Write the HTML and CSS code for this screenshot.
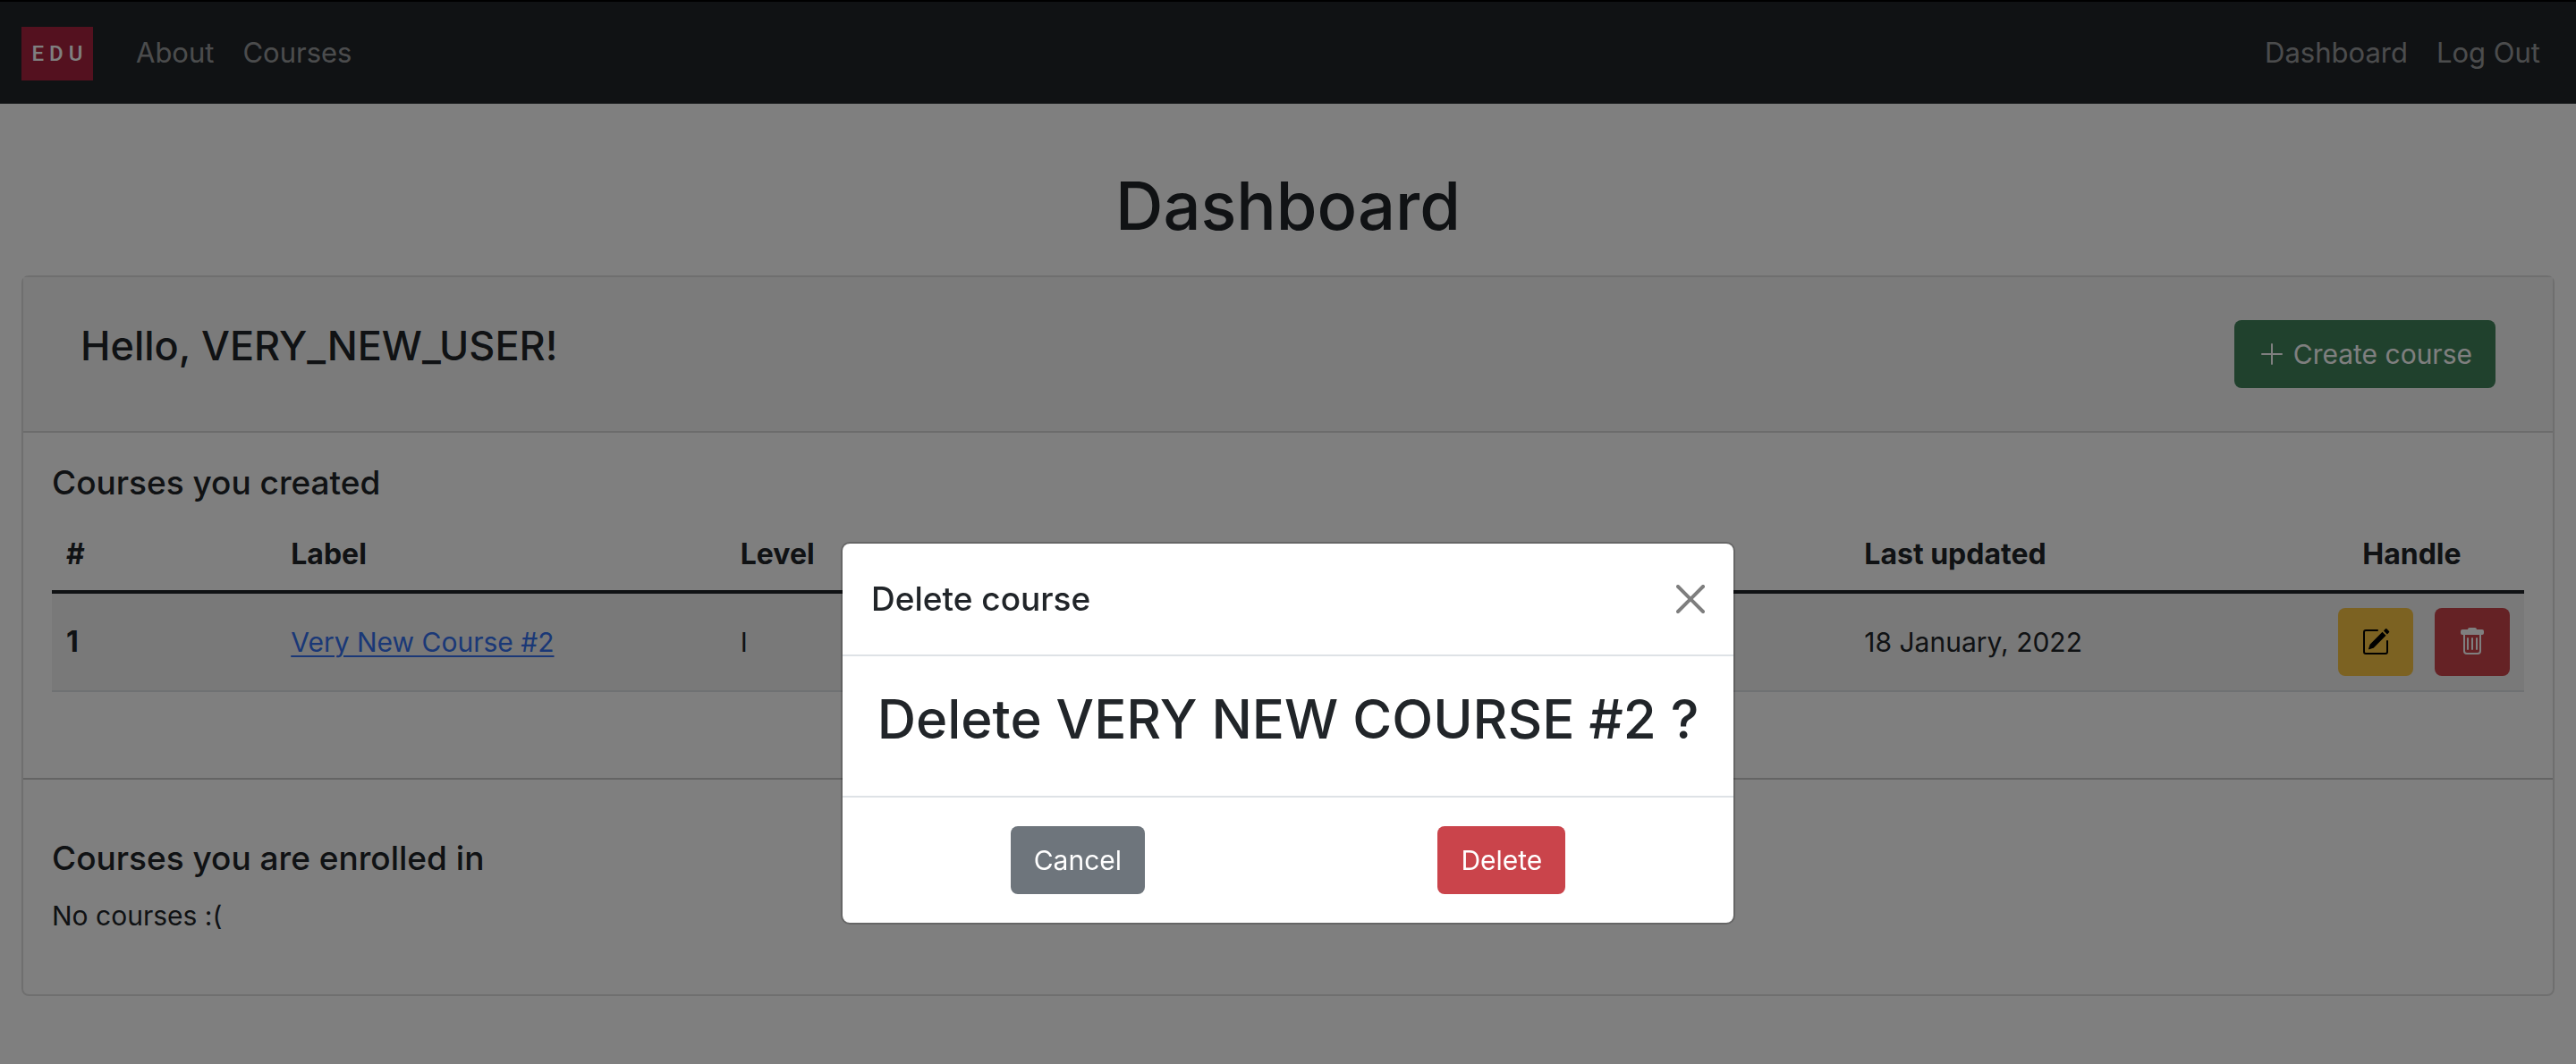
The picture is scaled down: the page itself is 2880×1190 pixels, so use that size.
FILE: index.html
```html
<!DOCTYPE html>
<html lang="en">
<head>
<meta charset="utf-8">
<meta name="viewport" content="width=device-width, initial-scale=1">
<title>Dashboard</title>
<link rel="stylesheet" href="styles.css">
</head>
<body>
<header class="navbar">
  <a class="brand" href="#">E D U</a>
  <nav class="nav-links">
    <a class="nav-link" href="#">About</a>
    <a class="nav-link" href="#">Courses</a>
  </nav>
  <nav class="nav-links nav-end">
    <a class="nav-link" href="#">Dashboard</a>
    <a class="nav-link" href="#">Log Out</a>
  </nav>
</header>

<main class="page">
  <h1 class="page-title">Dashboard</h1>
  <div class="card">
    <div class="card-header">
      <h2 class="greeting">Hello, VERY_NEW_USER!</h2>
      <button class="btn btn-success" type="button">
        <svg class="icon" viewBox="0 0 16 16" fill="currentColor" aria-hidden="true"><path d="M8 2a.5.5 0 0 1 .5.5v5h5a.5.5 0 0 1 0 1h-5v5a.5.5 0 0 1-1 0v-5h-5a.5.5 0 0 1 0-1h5v-5A.5.5 0 0 1 8 2Z"/></svg>
        Create course
      </button>
    </div>
    <section class="card-section created">
      <h3 class="section-title">Courses you created</h3>
      <table class="courses">
        <colgroup>
          <col class="col-number">
          <col class="col-label">
          <col class="col-level">
          <col class="col-updated">
          <col class="col-handle">
        </colgroup>
        <thead>
          <tr>
            <th scope="col">#</th>
            <th scope="col">Label</th>
            <th scope="col">Level</th>
            <th scope="col">Last updated</th>
            <th scope="col" class="handle-head">Handle</th>
          </tr>
        </thead>
        <tbody>
          <tr>
            <th scope="row">1</th>
            <td><a class="course-link" href="#">Very New Course #2</a></td>
            <td>I</td>
            <td>18 January, 2022</td>
            <td>
              <div class="row-actions">
                <button class="btn btn-warning" type="button" aria-label="Edit course">
                  <svg class="icon" viewBox="0 0 16 16" fill="currentColor" aria-hidden="true"><path d="M15.502 1.94a.5.5 0 0 1 0 .706L14.459 3.69l-2-2L13.502.646a.5.5 0 0 1 .707 0l1.293 1.293zm-1.75 2.456-2-2L4.939 9.21a.5.5 0 0 0-.121.196l-.805 2.414a.25.25 0 0 0 .316.316l2.414-.805a.5.5 0 0 0 .196-.12l6.813-6.814z"/><path d="M1 13.5A1.5 1.5 0 0 0 2.5 15h11a1.5 1.5 0 0 0 1.500-1.500v-6a.5.5 0 0 0-1 0v6a.5.5 0 0 1-.5.5h-11a.5.5 0 0 1-.5-.5v-11a.5.5 0 0 1 .5-.5H9a.5.5 0 0 0 0-1H2.500A1.500 1.500 0 0 0 1 2.500v11z"/></svg>
                </button>
                <button class="btn btn-danger" type="button" aria-label="Delete course">
                  <svg class="icon" viewBox="0 0 16 16" fill="currentColor" aria-hidden="true"><path d="M6.500 0a1 1 0 0 0-1 1H2.500a1 1 0 0 0-1 1v1a1 1 0 0 0 1 1H3v9a2 2 0 0 0 2 2h6a2 2 0 0 0 2-2V4h.5a1 1 0 0 0 1-1V2a1 1 0 0 0-1-1h-3a1 1 0 0 0-1-1h-3ZM4 4h8v9a1 1 0 0 1-1 1H5a1 1 0 0 1-1-1V4Zm1.500 1.500a.5.5 0 0 0-.5.5v6a.5.5 0 0 0 1 0V6a.5.5 0 0 0-.5-.5Zm2.500 0a.5.5 0 0 0-.5.5v6a.5.5 0 0 0 1 0V6a.5.5 0 0 0-.5-.5Zm2.500 0a.5.5 0 0 0-.5.5v6a.5.5 0 0 0 1 0V6a.5.5 0 0 0-.5-.5Z" fill-rule="evenodd"/></svg>
                </button>
              </div>
            </td>
          </tr>
        </tbody>
      </table>
    </section>
    <section class="card-section enrolled">
      <h3 class="section-title">Courses you are enrolled in</h3>
      <p class="empty-note">No courses :(</p>
    </section>
  </div>
</main>

<div class="backdrop">
  <div class="modal" role="dialog" aria-modal="true" aria-labelledby="modal-title">
    <div class="modal-header">
      <h2 class="modal-title" id="modal-title">Delete course</h2>
      <button class="btn-close" type="button" aria-label="Close">
        <svg class="icon-close" viewBox="0 0 16 16" fill="currentColor" aria-hidden="true"><path d="M.293.293a1 1 0 0 1 1.414 0L8 6.586 14.293.293a1 1 0 1 1 1.414 1.414L9.414 8l6.293 6.293a1 1 0 0 1-1.414 1.414L8 9.414l-6.293 6.293a1 1 0 0 1-1.414-1.414L6.586 8 .293 1.707a1 1 0 0 1 0-1.414z"/></svg>
      </button>
    </div>
    <div class="modal-body">
      <p class="question">Delete VERY NEW COURSE #2 ?</p>
    </div>
    <div class="modal-footer">
      <button class="btn btn-secondary" type="button">Cancel</button>
      <button class="btn btn-danger" type="button">Delete</button>
    </div>
  </div>
</div>
</body>
</html>
```
FILE: styles.css
```css
* {
  box-sizing: border-box;
}

body {
  margin: 0;
  background: #fff;
  color: #212529;
  font-family: Inter, "Liberation Sans", sans-serif;
  font-size: 30px;
  line-height: 48px;
}

h1, h2, h3, p {
  margin: 0;
  font-weight: 500;
}

/* Top bar */
.navbar {
  display: flex;
  align-items: center;
  padding: 28px 24px 26px;
  border-top: 2px solid #000;
  background: #212529;
}

.brand {
  display: flex;
  align-items: center;
  justify-content: center;
  width: 80px;
  height: 60px;
  margin-right: 32px;
  background: #a8223e;
  color: #fff;
  font-family: Roboto, "Liberation Sans", sans-serif;
  font-size: 24px;
  font-weight: 500;
  text-decoration: none;
  white-space: nowrap;
}

.nav-links {
  display: flex;
  padding-bottom: 2px;
  font-size: 31px;
}

.nav-end {
  margin-left: auto;
}

.nav-link {
  padding: 0 16px;
  color: rgba(255, 255, 255, 0.55);
  text-decoration: none;
}

/* Page */
.page {
  padding: 66px 24px;
}

.page-title {
  margin-bottom: 30px;
  font-size: 74px;
  line-height: 96px;
  text-align: center;
}

.card {
  border: 2px solid #dfdfdf;
  border-radius: 8px;
}

.card-header {
  display: flex;
  align-items: flex-start;
  justify-content: space-between;
  padding: 48px 64px;
  border-bottom: 2px solid #d8d8d8;
  background: #f7f7f7;
}

.greeting {
  font-size: 45px;
  line-height: 58px;
}

.card-section {
  padding: 32px;
}

.created {
  padding-bottom: 96px;
  border-bottom: 2px solid #c8c8c8;
}

.enrolled {
  padding: 64px 32px;
}

.section-title {
  margin-bottom: 16px;
  font-size: 37px;
  line-height: 48px;
}

.empty-note {
  font-weight: 400;
}

/* Courses table */
.courses {
  width: 100%;
  table-layout: fixed;
  border-spacing: 0;
}

.col-number, .col-handle {
  width: 9.09%;
}

.col-label, .col-updated {
  width: 18.18%;
}

.courses th, .courses td {
  padding: 16px;
  text-align: left;
  vertical-align: middle;
}

.courses th {
  font-size: 32px;
}

.courses thead th {
  border-bottom: 4px solid #212529;
}

.courses thead .handle-head {
  text-align: center;
}

.courses tbody th, .courses tbody td {
  border-bottom: 2px solid #dee2e6;
  background: #f2f2f2;
}

.course-link {
  color: #3471ee;
  text-decoration-thickness: 2px;
  text-underline-offset: 4px;
}

.row-actions {
  display: flex;
  justify-content: flex-end;
  gap: 24px;
}

/* Buttons */
.btn {
  display: flex;
  align-items: center;
  gap: 8px;
  min-height: 76px;
  padding: 14px 26px;
  border: 0;
  border-radius: 8px;
  color: #fff;
  font: inherit;
}

.btn-success {
  background: #40825a;
}

.btn-warning {
  background: #f8c444;
  color: #000;
}

.btn-danger {
  background: #ca444b;
}

.btn-secondary {
  background: #6e757c;
}

.icon {
  width: 32px;
  height: 32px;
}

/* Dialog */
.backdrop {
  position: fixed;
  inset: 0;
  display: flex;
  justify-content: center;
  align-items: flex-start;
  padding-top: 606px;
  background: rgba(0, 0, 0, 0.5);
}

.modal {
  width: 1000px;
  max-width: 100%;
  border: 2px solid rgba(0, 0, 0, 0.2);
  border-radius: 10px;
  background: #fff;
  background-clip: padding-box;
}

.modal-header {
  display: flex;
  align-items: center;
  justify-content: space-between;
  padding: 32px;
  border-bottom: 2px solid #dee2e6;
}

.modal-title {
  font-size: 37px;
  line-height: 60px;
}

.btn-close {
  display: flex;
  padding: 0;
  border: 0;
  background: none;
  color: #000;
  opacity: 0.5;
}

.icon-close {
  width: 32px;
  height: 32px;
}

.modal-body {
  padding: 32px 32px 48px;
}

.question {
  font-size: 60px;
  line-height: 76px;
  text-align: center;
}

.modal-footer {
  display: flex;
  justify-content: space-around;
  padding: 32px 24px;
  border-top: 2px solid #dee2e6;
}
```
